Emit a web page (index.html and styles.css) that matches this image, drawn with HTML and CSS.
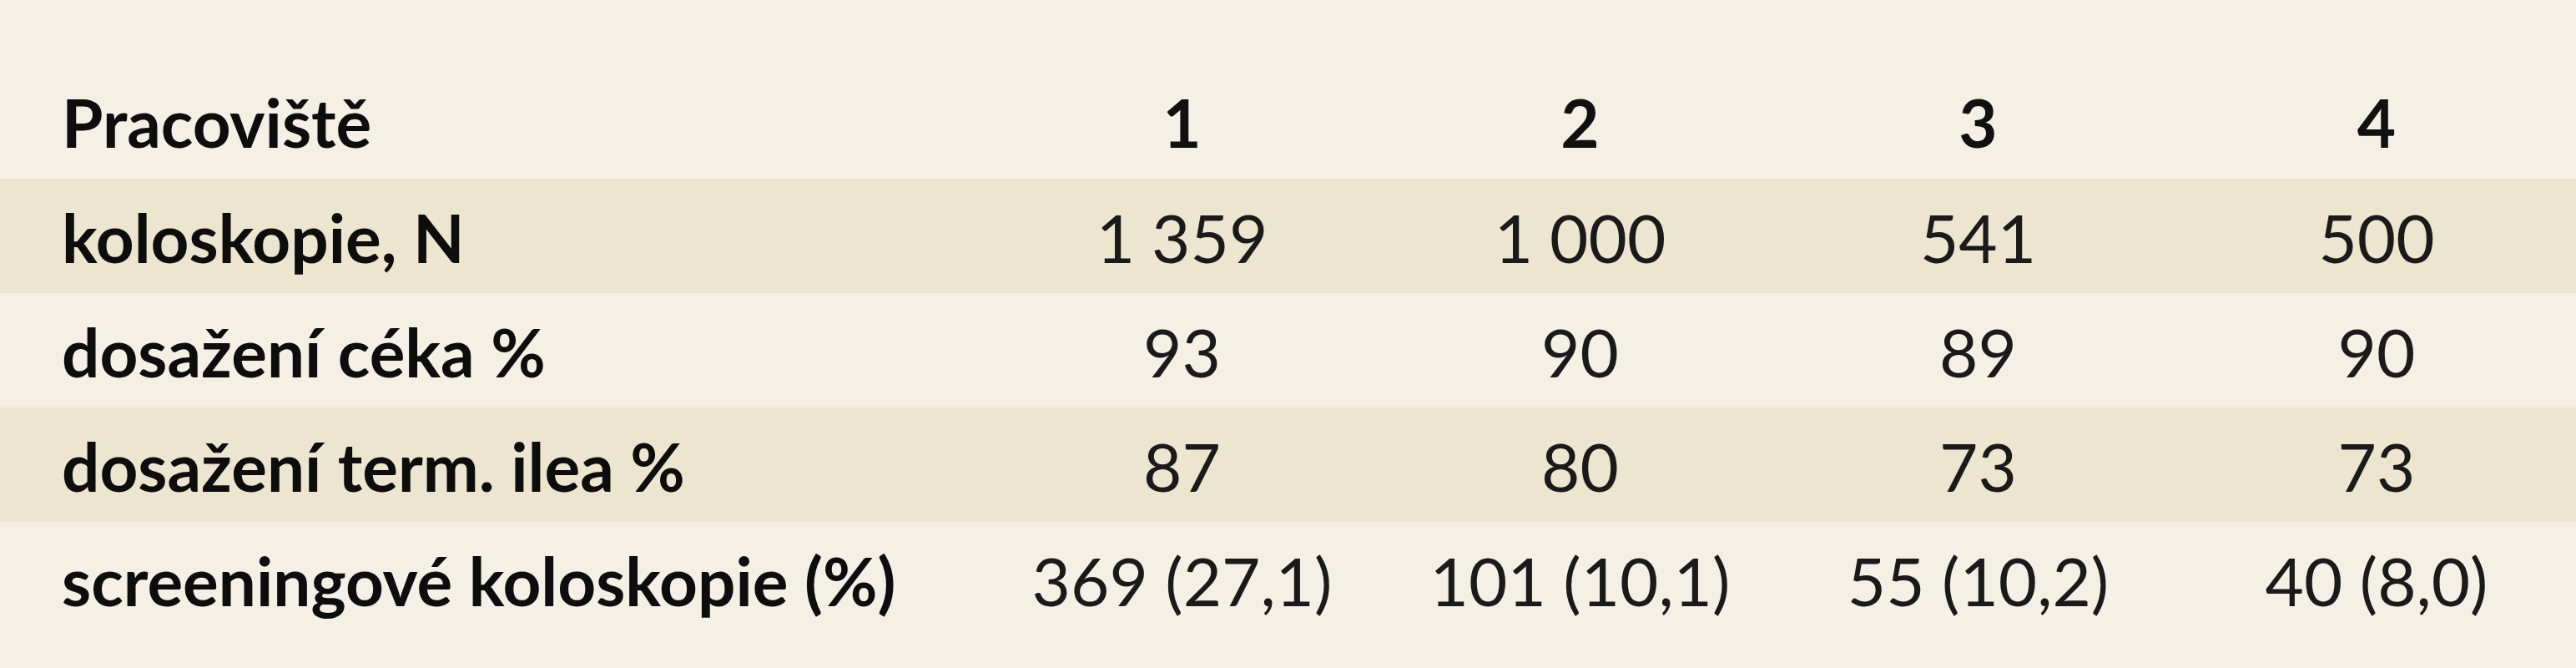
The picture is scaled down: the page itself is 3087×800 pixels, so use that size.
FILE: index.html
```
<!DOCTYPE html>
<html lang="cs">
<head>
<meta charset="utf-8">
<title>Pracoviště</title>
<link rel="stylesheet" href="styles.css">
</head>
<body>
<table class="stats">
  <colgroup>
    <col class="col-label">
    <col class="col-num">
    <col class="col-num">
    <col class="col-num">
    <col class="col-num-last">
  </colgroup>
  <thead>
    <tr class="head-row">
      <th class="label">Pracoviště</th>
      <th class="num">1</th>
      <th class="num">2</th>
      <th class="num">3</th>
      <th class="num">4</th>
    </tr>
  </thead>
  <tbody>
    <tr class="shaded">
      <td class="label">koloskopie, N</td>
      <td class="num">1&#8239;359</td>
      <td class="num">1&#8239;000</td>
      <td class="num">541</td>
      <td class="num">500</td>
    </tr>
    <tr>
      <td class="label">dosažení céka %</td>
      <td class="num">93</td>
      <td class="num">90</td>
      <td class="num">89</td>
      <td class="num">90</td>
    </tr>
    <tr class="shaded">
      <td class="label">dosažení term. ilea %</td>
      <td class="num">87</td>
      <td class="num">80</td>
      <td class="num">73</td>
      <td class="num">73</td>
    </tr>
    <tr>
      <td class="label">screeningové koloskopie (%)</td>
      <td class="num">369 (27,1)</td>
      <td class="num">101 (10,1)</td>
      <td class="num">55 (10,2)</td>
      <td class="num">40 (8,0)</td>
    </tr>
  </tbody>
</table>
</body>
</html>
```
FILE: styles.css
```
html, body {
  margin: 0;
  padding: 0;
  background: #f4f0e6;
}

body {
  font-family: Lato, "Liberation Sans", sans-serif;
  color: #111;
  width: 3087px;
  height: 800px;
  overflow: hidden;
}

.stats {
  margin-top: 100px;
  width: 3087px;
  table-layout: fixed;
  border-collapse: separate;
  border-spacing: 0;
  font-size: 80px;
}

.col-label { width: 1178px; }
.col-num { width: 477px; }
.col-num-last { width: 478px; }

.stats th,
.stats td {
  padding: 0;
  white-space: nowrap;
}

.head-row th {
  height: 93px;
  line-height: 93px;
  vertical-align: top;
  font-weight: 700;
  border-bottom: 21px solid #f6f2e8;
}

.stats tbody td {
  padding: 22px 0 19px;
  line-height: 96px;
  vertical-align: top;
}

.stats .label {
  text-align: left;
  padding-left: 74px;
  font-weight: 700;
  color: #0d0d0d;
}

.stats td.num {
  text-align: center;
  font-weight: 400;
  color: #1a1a1a;
}

.stats th.num {
  text-align: center;
}

.shaded td {
  background: #ece5d0;
}
```
